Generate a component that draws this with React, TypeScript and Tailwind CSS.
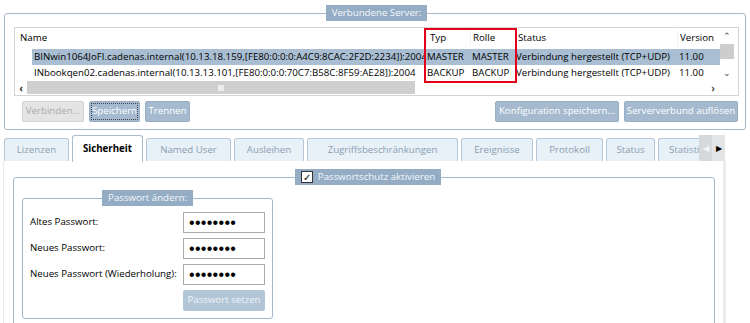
import React from "react";

type Row = {
  name: string;
  typ: string;
  rolle: string;
  status: string;
  version: string;
  selected?: boolean;
};

const rows: Row[] = [
  {
    name: "BINwin1064JoFI.cadenas.internal(10.13.18.159,[FE80:0:0:0:A4C9:8CAC:2F2D:2234]):2004",
    typ: "MASTER",
    rolle: "MASTER",
    status: "Verbindung hergestellt (TCP+UDP)",
    version: "11.00",
    selected: true,
  },
  {
    name: "INbookqen02.cadenas.internal(10.13.13.101,[FE80:0:0:0:70C7:B58C:8F59:AE28]):2004",
    typ: "BACKUP",
    rolle: "BACKUP",
    status: "Verbindung hergestellt (TCP+UDP)",
    version: "11.00",
  },
];

const tabs = [
  { label: "Lizenzen", w: "w-[65px]" },
  { label: "Sicherheit", w: "w-[71px]", active: true },
  { label: "Named User", w: "w-[85px]" },
  { label: "Ausleihen", w: "w-[70px]" },
  { label: "Zugriffsbeschränkungen", w: "w-[151px]" },
  { label: "Ereignisse", w: "w-[72px]" },
  { label: "Protokoll", w: "w-[67px]" },
  { label: "Status", w: "w-[49px]" },
];

const fields = ["Altes Passwort:", "Neues Passwort:", "Neues Passwort (Wiederholung):"];

function Legend({ children }: { children: React.ReactNode }) {
  return (
    <legend className="mx-auto h-[16px] bg-[#94adc5] px-[6px] leading-[16px] text-[#f4f7fa]">
      {children}
    </legend>
  );
}

function Button({ children, w, variant = "normal" }: { children: React.ReactNode; w: string; variant?: "normal" | "disabled" | "focus" | "faded" }) {
  const look =
    variant === "disabled"
      ? "bg-[#e4e4e4] border-[#d2d2d2] text-[#ababab]"
      : variant === "faded"
        ? "bg-[#b3c6d7] border-[#b3c6d7] text-[#eef3f7]"
        : "bg-[#a5bace] border-[#98aec4] text-white";
  return (
    <div className={`${w} ${look} flex h-[21px] items-center justify-center rounded-[2px] border p-[1px]`}>
      <div
        className={`flex h-full w-full items-center justify-center ${variant === "focus" ? "border border-dotted border-[#3b4450]" : ""}`}
      >
        {children}
      </div>
    </div>
  );
}

export default function App() {
  return (
    <div className="h-[323px] w-[750px] overflow-hidden bg-white pt-[5px] font-['Open_Sans',sans-serif] text-[9.7px] text-black">
      {/* Verbundene Server */}
      <fieldset className="mx-[4px] h-[125px] rounded-[3px] border border-[#a6b9cc] pl-[9px] pr-[6px]">
        <Legend>Verbundene Server:</Legend>

        <div className="relative mt-[6px] flex h-[69px] w-[725px] border border-[#d4d4d4]">
          <div className="flex w-[705px] flex-col">
            <div className="flex h-[21px] items-center">
              <div className="w-[411px] pl-[5px]">Name</div>
              <div className="w-[44px] border-l border-[#f0f0f0] pl-[3px]">Typ</div>
              <div className="w-[45px] border-l border-[#f0f0f0] pl-[2px]">Rolle</div>
              <div className="w-[162px] border-l border-[#f0f0f0] pl-[2px]">Status</div>
              <div className="w-[43px] border-l border-[#f0f0f0] pl-[2px]">Version</div>
            </div>
            {rows.map((r) => (
              <div key={r.name} className="flex h-[16px] items-center pl-[17px]">
                <div className={`flex h-full flex-1 items-center whitespace-nowrap ${r.selected ? "bg-[#a9bed2]" : ""}`}>
                  <div className="w-[394px] overflow-hidden pl-[2px]">{r.name}</div>
                  <div className="w-[44px] pl-[1px]">{r.typ}</div>
                  <div className="w-[45px] pl-[2px]">{r.rolle}</div>
                  <div className="w-[162px] pl-[1px]">{r.status}</div>
                  <div className="w-[43px] pl-[2px]">{r.version}</div>
                </div>
              </div>
            ))}
            <div className="flex h-[13px] items-center">
              <div className="flex w-[12px] justify-center text-[10px] font-bold leading-none text-[#333]">‹</div>
              <div className="flex h-full w-[388px] items-center justify-center bg-[#cfcfcf]">
                <div className="h-[6px] w-[6px] bg-[#ececec]" />
              </div>
              <div className="flex-1" />
              <div className="flex w-[14px] justify-center text-[10px] font-bold leading-none text-[#555]">›</div>
            </div>
          </div>
          <div className="flex w-[18px] flex-col">
            <div className="flex w-[14px] flex-col items-center">
              <div className="flex h-[14px] items-center text-[9px] leading-none text-[#444]">⌃</div>
              <div className="mt-[2px] h-[15px] w-[14px] bg-[#cdcdcd]" />
              <div className="mt-[6px] flex h-[14px] items-center text-[9px] leading-none text-[#444]">⌄</div>
            </div>
          </div>

          {/* highlight */}
          <div className="absolute left-[409px] top-[0px] h-[55px] w-[93px] border-2 border-[#e3001b]" />
        </div>

        <div className="mt-[5px] flex items-center pl-[8px] pr-[1px]">
          <div className="flex gap-[5px]">
            <Button w="w-[62px]" variant="disabled">Verbinden...</Button>
            <Button w="w-[51px]" variant="focus">Speichern</Button>
            <Button w="w-[45px]">Trennen</Button>
          </div>
          <div className="ml-auto flex gap-[5px]">
            <Button w="w-[124px]">Konfiguration speichern...</Button>
            <Button w="w-[114px]">Serververbund auflösen</Button>
          </div>
        </div>
      </fieldset>

      {/* Tabs */}
      <div className="mt-[5px] flex h-[26px] items-end gap-[3px] pl-[4px]">
        {tabs.map((t) =>
          t.active ? (
            <div
              key={t.label}
              className={`${t.w} relative z-10 -mb-[1px] flex h-[27px] items-center justify-center rounded-t-[3px] border border-b-0 border-[#a9bbcc] bg-white font-bold`}
            >
              {t.label}
            </div>
          ) : (
            <div
              key={t.label}
              className={`${t.w} flex h-[23px] items-center justify-center rounded-t-[3px] border border-b-0 border-[#b5c7d8] bg-[#e8f1f8] text-[#8a9db1]`}
            >
              {t.label}
            </div>
          ),
        )}
        <div className="flex h-[23px] w-[41px] items-center overflow-hidden whitespace-nowrap rounded-tl-[3px] border border-b-0 border-r-0 border-[#b5c7d8] bg-[#e8f1f8] pl-[10px] text-[#8a9db1]">
          Statistik
        </div>
        <div className="-ml-[3px] flex h-[26px]">
          <div className="flex w-[13px] items-center justify-center bg-[#d6d9dc] text-[8px] text-[#f4f4f4]">◀</div>
          <div className="flex w-[13px] items-center justify-center bg-[#e2e4e6] text-[8px] text-black">▶</div>
        </div>
      </div>

      {/* Sicherheit content */}
      <div className="ml-[3px] h-[162px] w-[723px] border-l border-r-[3px] border-[#ebebeb] pl-[9px] pt-[8px]">
        <fieldset className="h-[170px] w-[702px] rounded-[3px] border border-[#a6b9cc] pl-[8px]">
          <Legend>
            <span className="flex items-center gap-[5px]">
              <span className="flex h-[12px] w-[12px] items-center justify-center border border-[#333] bg-white text-[10px] leading-none text-black">✓</span>
              Passwortschutz aktivieren
            </span>
          </Legend>

          <fieldset className="mt-[5px] w-[251px] rounded-[3px] border border-[#a6b9cc] px-[7px] pb-[7px]">
            <Legend>Passwort ändern:</Legend>
            <div className="mt-[6px] flex flex-col gap-[5px]">
              {fields.map((f) => (
                <div key={f} className="flex h-[21px] items-center">
                  <div className="w-[153px] whitespace-nowrap">{f}</div>
                  <div className="flex h-[21px] w-[82px] items-center border border-[#ababab] pl-[5px] font-['Liberation_Sans',sans-serif] text-[16px] leading-none tracking-[0.3px]">
                    ••••••••
                  </div>
                </div>
              ))}
              <div className="flex">
                <div className="w-[153px]" />
                <Button w="w-[82px]" variant="faded">Passwort setzen</Button>
              </div>
            </div>
          </fieldset>
        </fieldset>
      </div>
    </div>
  );
}
